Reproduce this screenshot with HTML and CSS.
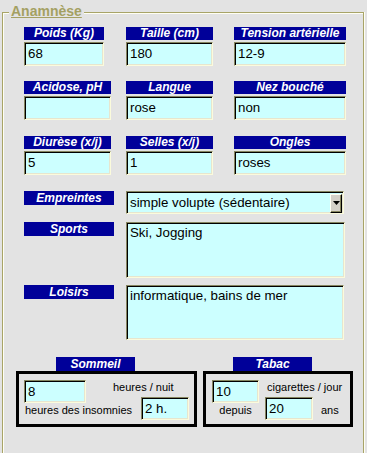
FILE: index.html
```html
<!DOCTYPE html>
<html lang="fr">
<head>
<meta charset="utf-8">
<title>Anamnèse</title>
<link rel="stylesheet" href="styles.css">
</head>
<body>
<div class="frame">
  <div class="legend">Anamnèse</div>

  <div class="rows">
    <div class="row">
      <div class="field w-80"><div class="lbl">Poids (Kg)</div><div class="inp">68</div></div>
      <div class="field w-87"><div class="lbl">Taille (cm)</div><div class="inp">180</div></div>
      <div class="field w-112"><div class="lbl">Tension artérielle</div><div class="inp">12-9</div></div>
    </div>
    <div class="row">
      <div class="field w-87"><div class="lbl">Acidose, pH</div><div class="inp"></div></div>
      <div class="field w-87"><div class="lbl">Langue</div><div class="inp">rose</div></div>
      <div class="field w-112"><div class="lbl">Nez bouché</div><div class="inp">non</div></div>
    </div>
    <div class="row row-3">
      <div class="field w-87"><div class="lbl">Diurèse (x/j)</div><div class="inp">5</div></div>
      <div class="field w-87"><div class="lbl">Selles (x/j)</div><div class="inp">1</div></div>
      <div class="field w-112"><div class="lbl">Ongles</div><div class="inp">roses</div></div>
    </div>
  </div>

  <div class="wide wide-select">
    <div class="lbl lbl-wide">Empreintes</div>
    <div class="inp select">
      <span class="select-text">simple volupte (sédentaire)</span>
      <span class="drop-btn"><svg width="7" height="4" viewBox="0 0 7 4"><path d="M0 0h7L3.5 4z" fill="#000"/></svg></span>
    </div>
  </div>

  <div class="wide wide-sports">
    <div class="lbl lbl-wide">Sports</div>
    <div class="inp area">Ski, Jogging</div>
  </div>

  <div class="wide wide-loisirs">
    <div class="lbl lbl-wide">Loisirs</div>
    <div class="inp area">informatique, bains de mer</div>
  </div>

  <div class="groups">
    <div class="group group-sommeil">
      <div class="lbl group-lbl lbl-sommeil">Sommeil</div>
      <div class="box">
        <div class="box-row">
          <div class="inp small in-8">8</div>
          <span class="txt txt-nuit">heures / nuit</span>
        </div>
        <div class="box-row box-row-2">
          <span class="txt txt-insom">heures des insomnies</span>
          <div class="inp small in-2h">2 h.</div>
        </div>
      </div>
    </div>
    <div class="group group-tabac">
      <div class="lbl group-lbl lbl-tabac">Tabac</div>
      <div class="box">
        <div class="box-row">
          <div class="inp small in-10">10</div>
          <span class="txt txt-cig">cigarettes / jour</span>
        </div>
        <div class="box-row box-row-2">
          <span class="txt txt-depuis">depuis</span>
          <div class="inp small in-20">20</div>
          <span class="txt txt-ans">ans</span>
        </div>
      </div>
    </div>
  </div>
</div>
</body>
</html>
```

FILE: styles.css
```css
html, body {
  margin: 0;
  padding: 0;
  overflow: hidden;
  background: #e3e3e3;
}
body {
  width: 367px;
  height: 453px;
  font-family: "Liberation Sans", Arial, sans-serif;
}

.frame {
  position: relative;
  margin: 12px 0 0 2px;
  width: 362px;
  height: 441px;
  border: 1px solid #a8a468;
  border-bottom-width: 0;
  box-shadow: inset 1px 1px 0 #fffff4, 1px 0 0 #fffff4;
  padding: 14px 0 0 21px;
  box-sizing: border-box;
}

.legend {
  position: absolute;
  left: 6px;
  top: -10px;
  padding: 0 2px;
  background: #e3e3e3;
  color: #a4a062;
  font-weight: bold;
  font-size: 14px;
  line-height: 16px;
  text-decoration: underline;
}

.rows {
  display: flex;
  flex-direction: column;
  gap: 15px;
}
.row {
  display: grid;
  grid-template-columns: 102px 108px 112px;
}
.row-3 { margin-top: 1px; }

.field {
  display: flex;
  flex-direction: column;
  gap: 2px;
}
.w-80 { width: 80px; }
.w-87 { width: 87px; }
.w-112 { width: 112px; }

.lbl {
  background: #000099;
  color: #fff;
  font-weight: bold;
  font-style: italic;
  font-size: 12px;
  line-height: 13px;
  height: 13px;
  text-align: center;
  white-space: nowrap;
  overflow: hidden;
}

.inp {
  box-sizing: border-box;
  height: 24px;
  background: #ccffff;
  border-top: 1px solid #85855f;
  border-left: 1px solid #85855f;
  border-bottom: 1px solid #fbfbdc;
  border-right: 1px solid #fbfbdc;
  box-shadow: inset 1px 1px 0 #000, inset -1px -1px 0 #e6e6cf;
  padding: 1px 3px 0 3px;
  font-size: 13.3px;
  line-height: 20px;
  color: #000;
  white-space: nowrap;
  overflow: hidden;
}

.wide {
  display: flex;
  align-items: flex-start;
}
.lbl-wide {
  width: 90px;
  height: 14px;
  line-height: 14px;
  margin-right: 12px;
  flex: none;
}
.wide-select { margin-top: 16px; }
.wide-sports { margin-top: 8px; }
.wide-loisirs { margin-top: 7px; }

.select {
  width: 218px;
  height: 23px;
  display: flex;
  align-items: flex-start;
  padding: 0 0 0 3px;
  line-height: 21px;
}
.select-text { flex: 1; }
.drop-btn {
  width: 12px;
  height: 19px;
  margin: 2px 1px 0 0;
  box-sizing: border-box;
  background: #d4d0c8;
  border-top: 1px solid #fffff4;
  border-left: 1px solid #fffff4;
  border-right: 1px solid #000;
  border-bottom: 1px solid #000;
  box-shadow: inset -1px -1px 0 #85855f;
  display: flex;
  align-items: center;
  justify-content: center;
}
.drop-btn svg { display: block; margin-bottom: 1px; }

.area {
  width: 219px;
  height: 56px;
  padding: 2px 3px 0 3px;
  line-height: 15px;
  white-space: normal;
}
.wide-loisirs .area { width: 218px; height: 55px; }

.groups {
  display: flex;
  gap: 6px;
  margin: 17px 0 0 -8px;
}
.group {
  display: flex;
  flex-direction: column;
}
.group-sommeil { width: 181px; }
.group-tabac { width: 150px; }

.group-lbl {
  width: 79px;
  height: 14px;
  line-height: 14px;
}
.lbl-sommeil { margin-left: 40px; }
.lbl-tabac { margin-left: 30px; }

.box {
  box-sizing: border-box;
  height: 56px;
  border: 3px solid #000;
  padding: 6px 5px 0 5px;
}
.group-tabac .box { padding-left: 6px; }

.box-row {
  display: flex;
  align-items: flex-start;
}
.box-row-2 { margin-top: -6px; }

.small {
  height: 23px;
  line-height: 19px;
}
.in-8 { width: 62px; }
.in-2h { width: 48px; margin-left: auto; }
.in-10 { width: 47px; }
.in-20 { width: 48px; margin-left: 6px; }

.txt {
  font-size: 11px;
  line-height: 13px;
  color: #000;
  white-space: nowrap;
}
.txt-nuit { margin: 1px 0 0 27px; }
.txt-insom { margin: 7px 0 0 1px; }
.txt-cig { margin: 1px 0 0 8px; }
.txt-depuis { width: 47px; text-align: center; margin-top: 7px; }
.txt-ans { margin: 7px 0 0 8px; }
```
